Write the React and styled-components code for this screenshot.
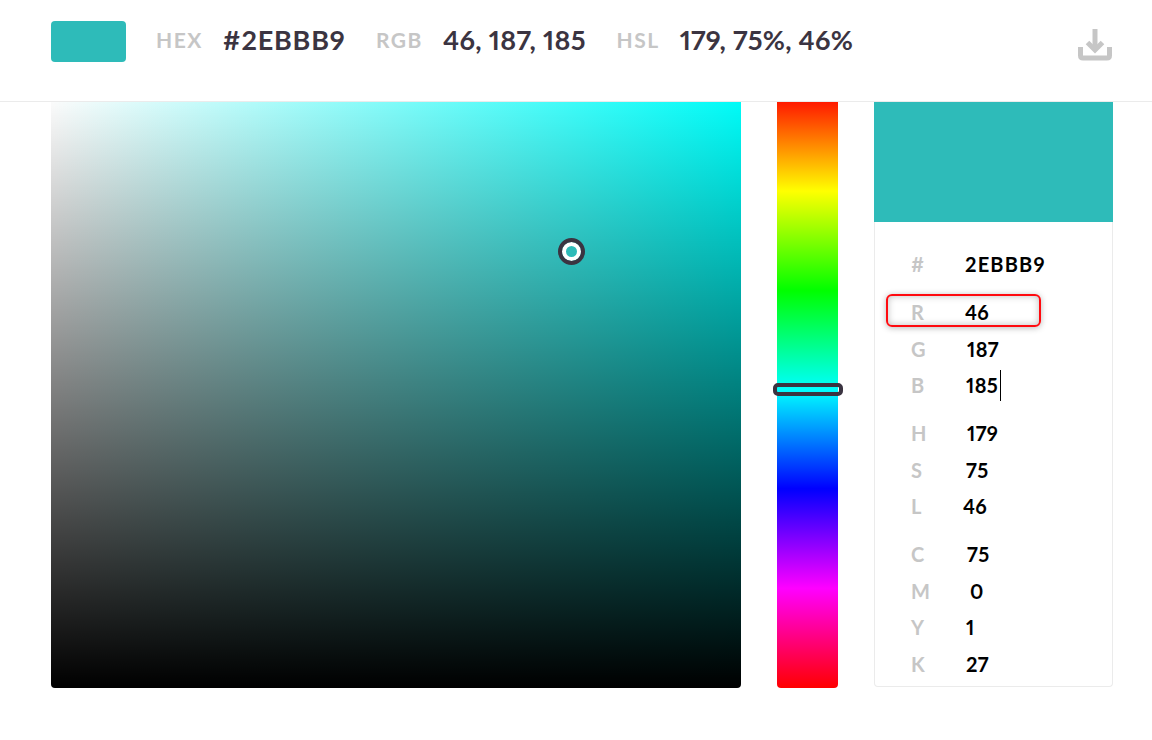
import React from 'react';
import styled, { createGlobalStyle } from 'styled-components';

const GlobalStyle = createGlobalStyle`
  html, body {
    margin: 0;
    padding: 0;
    background: #fff;
    font-family: "Lato", "Open Sans", sans-serif;
    font-variant-numeric: proportional-nums;
  }
`;

const Page = styled.div`
  width: 1152px;
  height: 740px;
  overflow: hidden;
`;

const Header = styled.header`
  display: flex;
  align-items: flex-start;
  height: 101px;
  padding-left: 51px;
  padding-right: 40px;
  border-bottom: 1px solid #ebebeb;
`;

const Swatch = styled.div`
  flex: none;
  width: 75px;
  height: 41px;
  margin-top: 21px;
  margin-right: 30px;
  border-radius: 4px;
  background: #2ebbb9;
`;

const Info = styled.div`
  display: flex;
  align-items: center;
  height: 41px;
  margin-top: 19px;
  margin-right: 30.5px;
`;

const InfoLabel = styled.span`
  margin-right: 20px;
  font-size: 21px;
  font-weight: 700;
  letter-spacing: 1.5px;
  color: #c6c6c6;
`;

const InfoValue = styled.span`
  font-size: 27px;
  font-weight: 700;
  letter-spacing: ${(p) => p.$tracking}px;
  color: #3b3441;
`;

const SaveButton = styled.button`
  margin-left: auto;
  margin-top: 29px;
  padding: 0;
  border: 0;
  background: none;
  width: 34px;
  height: 32px;
`;

const SaveIcon = styled.svg`
  display: block;
`;

const Main = styled.main`
  display: flex;
  align-items: flex-start;
  gap: 36px;
  padding: 0 39px 0 51px;
`;

const Field = styled.div`
  position: relative;
  width: 690px;
  height: 586px;
  border-radius: 0 0 4px 4px;
  background:
    linear-gradient(to top, #000, rgba(0, 0, 0, 0.017)),
    linear-gradient(to right, #fff, #00fffb);
`;

const FieldThumb = styled.div`
  position: absolute;
  left: 507px;
  top: 136px;
  box-sizing: border-box;
  width: 27px;
  height: 27px;
  border: 4px solid #3b3441;
  border-radius: 50%;
  background: #2ebbb9;
  box-shadow: inset 0 0 0 4px #fff;
`;

const HueBar = styled.div`
  position: relative;
  width: 61px;
  height: 586px;
  border-radius: 0 0 4px 4px;
  background: linear-gradient(
    to bottom,
    #ff1a00 0%,
    #ffff00 15.2%,
    #00ff00 32.2%,
    #00ffff 49.1%,
    #0000ff 66%,
    #ff00ff 83%,
    #ff0000 100%
  );
`;

const HueThumb = styled.div`
  position: absolute;
  left: -4px;
  top: 281px;
  box-sizing: border-box;
  width: 70px;
  height: 13px;
  border: 4px solid #3b3441;
  border-radius: 5px;
`;

const Panel = styled.aside`
  width: 239px;
  height: 585px;
  box-sizing: border-box;
  border: 1px solid #ebebeb;
  border-top: 0;
  border-radius: 0 0 4px 4px;
`;

const PanelColor = styled.div`
  height: 120px;
  margin: 0 -1px;
  background: #2ebbb9;
`;

const Groups = styled.div`
  display: flex;
  flex-direction: column;
  gap: 11.5px;
  padding-top: 24px;
`;

const Group = styled.div`
  display: flex;
  flex-direction: column;
`;

const Row = styled.div`
  position: relative;
  display: flex;
  align-items: center;
  height: 36.5px;
  padding-left: 36px;
  font-size: 20px;
  font-weight: 700;
`;

const RowLabel = styled.span`
  width: 54px;
  color: #c6c6c6;
`;

const RowValue = styled.span`
  display: flex;
  align-items: center;
  margin-left: ${(p) => p.$shift || 0}px;
  letter-spacing: ${(p) => p.$tracking || 0.4}px;
  color: #000;
`;

const Caret = styled.i`
  display: block;
  width: 1px;
  height: 31px;
  margin-left: 1.5px;
  background: #000;
`;

const Highlight = styled.div`
  position: absolute;
  left: 11px;
  top: 0;
  width: 155px;
  height: 33px;
  box-sizing: border-box;
  border: 2px solid #ff0a0f;
  border-radius: 6px;
  box-shadow: 0 1px 6px rgba(0, 0, 0, 0.28), inset 0 0 7px rgba(0, 0, 0, 0.26);
`;

const groups = [
  [{ label: '#', value: '2EBBB9', tracking: 1.2 }],
  [
    { label: 'R', value: '46', marked: true },
    { label: 'G', value: '187', shift: 2 },
    { label: 'B', value: '185', shift: 1, caret: true },
  ],
  [
    { label: 'H', value: '179', shift: 2 },
    { label: 'S', value: '75', shift: 1 },
    { label: 'L', value: '46', shift: -2 },
  ],
  [
    { label: 'C', value: '75', shift: 2 },
    { label: 'M', value: '0', shift: 5 },
    { label: 'Y', value: '1', shift: 1 },
    { label: 'K', value: '27', shift: 1 },
  ],
];

function DownloadIcon() {
  return (
    <SaveIcon width="34" height="32" viewBox="0 0 34 32" fill="none" stroke="#c6c6c6" strokeWidth="5">
      <path d="M17 0v21" />
      <path d="M9.500 13.500 17 21l7.500-7.500" />
      <path d="M2.500 18v8.500c0 1.600 1 2.500 2.500 2.500h24c1.500 0 2.500-.9 2.500-2.500V18" />
    </SaveIcon>
  );
}

function App() {
  return (
    <Page>
      <GlobalStyle />
      <Header>
        <Swatch />
        <Info>
          <InfoLabel>HEX</InfoLabel>
          <InfoValue $tracking={0.8}>#2EBBB9</InfoValue>
        </Info>
        <Info>
          <InfoLabel>RGB</InfoLabel>
          <InfoValue $tracking={0.35}>46, 187, 185</InfoValue>
        </Info>
        <Info>
          <InfoLabel>HSL</InfoLabel>
          <InfoValue $tracking={0.25}>179, 75%, 46%</InfoValue>
        </Info>
        <SaveButton aria-label="Download">
          <DownloadIcon />
        </SaveButton>
      </Header>
      <Main>
        <Field>
          <FieldThumb />
        </Field>
        <HueBar>
          <HueThumb />
        </HueBar>
        <Panel>
          <PanelColor />
          <Groups>
            {groups.map((rows) => (
              <Group key={rows[0].label}>
                {rows.map((row) => (
                  <Row key={row.label}>
                    {row.marked && <Highlight />}
                    <RowLabel>{row.label}</RowLabel>
                    <RowValue $shift={row.shift} $tracking={row.tracking}>
                      {row.value}
                      {row.caret && <Caret />}
                    </RowValue>
                  </Row>
                ))}
              </Group>
            ))}
          </Groups>
        </Panel>
      </Main>
    </Page>
  );
}

export default App;
